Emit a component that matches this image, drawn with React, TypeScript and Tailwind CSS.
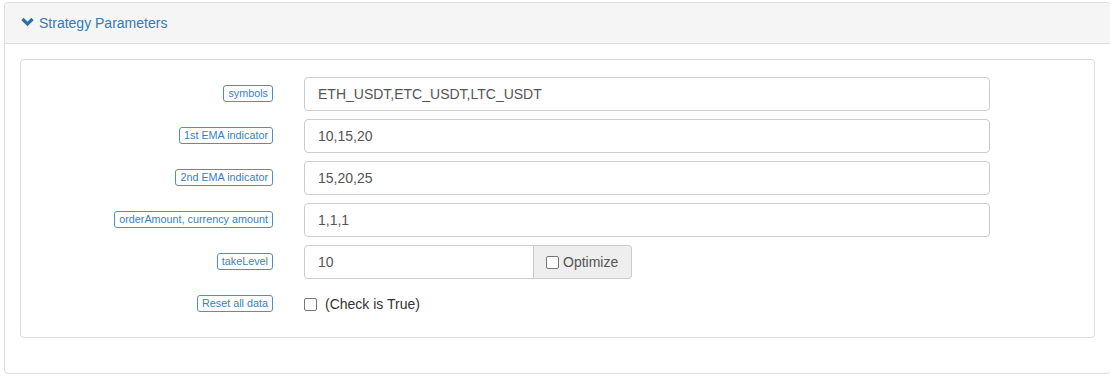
import React from 'react'

const ROWS = [
  { label: 'symbols', value: 'ETH_USDT,ETC_USDT,LTC_USDT' },
  { label: '1st EMA indicator', value: '10,15,20' },
  { label: '2nd EMA indicator', value: '15,20,25' },
  { label: 'orderAmount, currency amount', value: '1,1,1' },
]

function Badge({ text }: { text: string }) {
  return (
    <span className="inline-flex items-center h-[17px] px-[4px] mt-[-2px] rounded-[3px] border border-[#4a8fd0] text-[10.8px] leading-none text-[#3a7fc2]">
      {text}
    </span>
  )
}

function Box() {
  return <span className="inline-block w-[13px] h-[13px] rounded-[2px] border border-[#767676] bg-white" />
}

export default function App() {
  return (
    <div className="w-[1110px] h-[389px] bg-white pt-[2px] pl-[4px] font-['Liberation_Sans',Arial,sans-serif]">
      <div className="w-[1107px] border border-[#dddddd] rounded-[4px]">
        {/* Header */}
        <div className="h-[41px] bg-[#f5f5f5] border-b border-[#dddddd] rounded-t-[4px] flex items-center pl-[16px] gap-[5px]">
          <svg width="13" height="10" viewBox="0 0 13 10" className="mt-[-2px]">
            <polyline points="1.5,2 6.5,7 11.5,2" fill="none" stroke="#2f6ea8" strokeWidth="3.2" strokeLinejoin="miter" />
          </svg>
          <span className="text-[14px] text-[#337ab7]">Strategy Parameters</span>
        </div>

        {/* Body */}
        <div className="p-[15px] pb-[35px]">
          <div className="border border-[#dcdcdc] rounded-[4px] pt-[17px] pb-[16px] flex flex-col gap-[8px]">
            {ROWS.map(r => (
              <div key={r.label} className="flex items-center h-[34px]">
                <div className="w-[252px] flex justify-end">
                  <Badge text={r.label} />
                </div>
                <div className="ml-[31px] w-[686px] h-[34px] border border-[#cccccc] rounded-[4px] flex items-center pl-[13px] text-[14px] text-[#555555]">
                  {r.value}
                </div>
              </div>
            ))}

            <div className="flex items-center h-[34px]">
              <div className="w-[252px] flex justify-end">
                <Badge text="takeLevel" />
              </div>
              <div className="ml-[31px] flex h-[34px]">
                <div className="w-[230px] border border-[#cccccc] rounded-l-[4px] flex items-center pl-[13px] text-[14px] text-[#555555]">
                  10
                </div>
                <div className="w-[98px] border border-l-0 border-[#cccccc] rounded-r-[4px] bg-[#eeeeee] flex items-center pl-[12px] gap-[4px] text-[14px] text-[#555555]">
                  <Box />
                  <span>Optimize</span>
                </div>
              </div>
            </div>

            <div className="flex items-center h-[34px]">
              <div className="w-[252px] flex justify-end">
                <Badge text="Reset all data" />
              </div>
              <div className="ml-[31px] flex items-center gap-[8px] text-[14px] text-[#333333]">
                <Box />
                <span>(Check is True)</span>
              </div>
            </div>
          </div>
        </div>
      </div>
    </div>
  )
}
